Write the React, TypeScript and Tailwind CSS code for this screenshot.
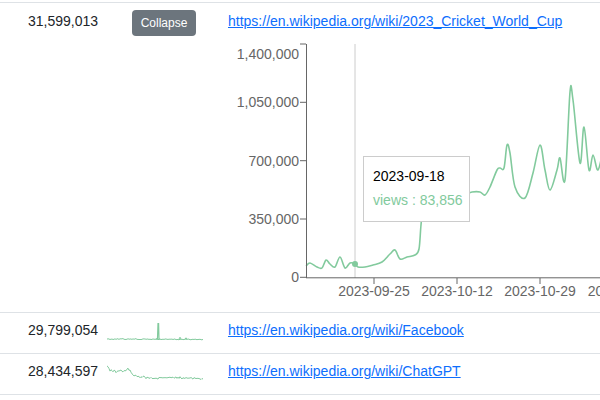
import React from "react";

const GREEN = "#82ca9d";

type P = [number, number];

function smooth(pts: P[]): string {
  let d = `M${pts[0][0].toFixed(1)},${pts[0][1].toFixed(1)}`;
  for (let i = 0; i < pts.length - 1; i++) {
    const p0 = pts[i - 1] || pts[i];
    const p1 = pts[i];
    const p2 = pts[i + 1];
    const p3 = pts[i + 2] || p2;
    const t = 1 / 6;
    const c1x = p1[0] + (p2[0] - p0[0]) * t;
    const c1y = p1[1] + (p2[1] - p0[1]) * t;
    const c2x = p2[0] - (p3[0] - p1[0]) * t;
    const c2y = p2[1] - (p3[1] - p1[1]) * t;
    d += ` C${c1x.toFixed(1)},${c1y.toFixed(1)} ${c2x.toFixed(1)},${c2y.toFixed(1)} ${p2[0].toFixed(1)},${p2[1].toFixed(1)}`;
  }
  return d;
}

const mainGlobal: P[] = [
  [306, 266], [310, 263], [317, 267], [322, 268], [326, 260], [330, 264], [335, 267],
  [340, 257], [345, 268], [350, 263], [355, 264], [358, 267], [365, 267], [373, 265],
  [382, 262], [390, 254], [395, 250], [400, 259], [407, 257], [415, 255], [419, 249],
  [421, 225], [424, 200], [430, 193], [445, 190], [460, 195], [472, 192], [480, 192],
  [485, 195], [490, 187], [497, 170], [500, 168], [504, 168], [507, 145], [510, 153],
  [515, 187], [525, 198], [533, 173], [540, 145], [545, 170], [550, 190], [557, 170],
  [560, 158], [565, 180], [570, 92], [573, 100], [580, 163], [584, 127], [589, 170],
  [593, 155], [598, 170], [604, 150], [610, 160],
];
const mainPts: P[] = mainGlobal.map(([x, y]) => [x - 228, y - 40]);

function rng(seed: number) {
  let s = seed;
  return () => {
    s = (s * 1103515245 + 12345) % 2147483648;
    return s / 2147483648;
  };
}

function noisyLine(anchors: P[], seed: number, amp: number): string {
  const r = rng(seed);
  const out: P[] = [];
  for (let x = 0; x <= 96; x += 1) {
    let y = anchors[anchors.length - 1][1];
    for (let i = 0; i < anchors.length - 1; i++) {
      const a = anchors[i];
      const b = anchors[i + 1];
      if (x >= a[0] && x <= b[0]) {
        const f = b[0] === a[0] ? 0 : (x - a[0]) / (b[0] - a[0]);
        y = a[1] + (b[1] - a[1]) * f;
        break;
      }
    }
    out.push([x, y + (r() - 0.5) * amp]);
  }
  return "M" + out.map((p) => `${p[0].toFixed(1)},${p[1].toFixed(1)}`).join(" L");
}

const spark1 = (() => {
  const base = noisyLine([[0, 18], [96, 18.5]], 7, 0.9);
  return base;
})();
const spark1Spike = "M49,18 L50.5,17.5 L51,2.5 L51.6,2.5 L52,17.8 L53,18";
const spark1Bumps = "M72,18 L73,16.2 L74,18 M78,18 L79,16.8 L80,18";

const spark2 = noisyLine(
  [
    [0, 3.5], [3, 8], [10, 10], [13, 8], [16, 10], [20, 7], [21, 6], [25, 12],
    [30, 15], [36, 15], [41, 16], [60, 16.2], [63, 15], [76, 16], [86, 16], [96, 17.5],
  ],
  13,
  2.2
);

function Link({ children }: { children: React.ReactNode }) {
  return (
    <a href="#" className="text-[#0d6efd] underline leading-[21px] whitespace-nowrap">
      {children}
    </a>
  );
}

function Chart() {
  const yTicks: { label: string; y: number; ly: number }[] = [
    { label: "1,400,000", y: 4, ly: 14 },
    { label: "1,050,000", y: 62.3, ly: 62 },
    { label: "700,000", y: 120.7, ly: 120.7 },
    { label: "350,000", y: 179, ly: 179 },
    { label: "0", y: 237.3, ly: 237.3 },
  ];
  const xTicks: { label: string; x: number }[] = [
    { label: "2023-09-25", x: 146 },
    { label: "2023-10-12", x: 229 },
    { label: "2023-10-29", x: 312 },
    { label: "2023-11-15", x: 395 },
  ];
  return (
    <div className="relative w-[372px] h-[264px]">
      <svg width="372" height="264" viewBox="0 0 372 264" className="block overflow-hidden">
        <line x1="127" y1="4" x2="127" y2="238" stroke="#cccccc" strokeWidth="1" />
        <path d={smooth(mainPts)} fill="none" stroke={GREEN} strokeWidth="1.6" />
        <circle cx="127" cy="224" r="3" fill={GREEN} />
        <line x1="78.5" y1="4" x2="78.5" y2="238" stroke="#666" strokeWidth="1" />
        <line x1="78" y1="237.8" x2="380" y2="237.8" stroke="#666" strokeWidth="1" />
        {yTicks.map((t) => (
          <g key={t.label}>
            <line x1="72" y1={t.y} x2="78" y2={t.y} stroke="#666" strokeWidth="1" />
            <text
              x="71"
              y={t.ly + 5}
              textAnchor="end"
              fontSize="14"
              fill="#666"
              fontFamily="'Liberation Sans', Arial, sans-serif"
            >
              {t.label}
            </text>
          </g>
        ))}
        {xTicks.map((t) => (
          <g key={t.label}>
            <line x1={t.x} y1="238" x2={t.x} y2="244" stroke="#666" strokeWidth="1" />
            <text
              x={t.x}
              y="256"
              textAnchor="middle"
              fontSize="14"
              fill="#666"
              fontFamily="'Liberation Sans', Arial, sans-serif"
            >
              {t.label}
            </text>
          </g>
        ))}
      </svg>
      <div className="absolute left-[135px] top-[116px] w-[107px] h-[66px] bg-white border border-[#cccccc] px-[9px] pt-[9px] leading-[21px] text-[14px] whitespace-nowrap">
        <div className="text-[#000]">2023-09-18</div>
        <div className="text-[#82ca9d] pt-[3px]">views : 83,856</div>
      </div>
    </div>
  );
}

export default function App() {
  return (
    <div className="w-[600px] h-[400px] bg-white overflow-hidden font-['Liberation_Sans',Arial,sans-serif] text-[14px] text-[#212529]">
      <div className="h-[3px] border-b border-[#dee2e6]" />
      <div className="flex h-[310px] border-b border-[#dee2e6]">
        <div className="w-[106px] shrink-0 pr-2 pt-2 text-right leading-[21px]">31,599,013</div>
        <div className="w-[122px] shrink-0 pt-[7px] pl-[26px]">
          <button className="h-[26px] w-[64px] rounded-[4px] bg-[#6c757d] text-white text-[12px] leading-[26px]">
            Collapse
          </button>
        </div>
        <div className="flex-1 min-w-0 pt-2 flex flex-col">
          <div>
            <Link>https://en.wikipedia.org/wiki/2023_Cricket_World_Cup</Link>
          </div>
          <div className="mt-2">
            <Chart />
          </div>
        </div>
      </div>
      <div className="flex h-[41px] border-b border-[#dee2e6]">
        <div className="w-[106px] shrink-0 pr-2 pt-[7px] text-right leading-[21px]">29,799,054</div>
        <div className="w-[122px] shrink-0 pt-[8px] pl-[1px]">
          <svg width="96" height="20" viewBox="0 0 96 20" className="block">
            <path d={spark1} fill="none" stroke={GREEN} strokeWidth="1" />
            <path d={spark1Spike} fill="none" stroke={GREEN} strokeWidth="1.2" />
            <path d={spark1Bumps} fill="none" stroke={GREEN} strokeWidth="1" />
          </svg>
        </div>
        <div className="flex-1 pt-[7px]">
          <Link>https://en.wikipedia.org/wiki/Facebook</Link>
        </div>
      </div>
      <div className="flex h-[41px] border-b border-[#dee2e6]">
        <div className="w-[106px] shrink-0 pr-2 pt-[7px] text-right leading-[21px]">28,434,597</div>
        <div className="w-[122px] shrink-0 pt-[8px] pl-[1px]">
          <svg width="96" height="20" viewBox="0 0 96 20" className="block">
            <path d={spark2} fill="none" stroke={GREEN} strokeWidth="1" />
          </svg>
        </div>
        <div className="flex-1 pt-[7px]">
          <Link>https://en.wikipedia.org/wiki/ChatGPT</Link>
        </div>
      </div>
    </div>
  );
}
